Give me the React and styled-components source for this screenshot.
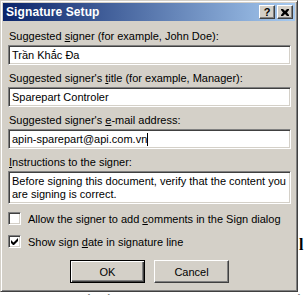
import React from 'react';
import styled, { createGlobalStyle } from 'styled-components';

const Global = createGlobalStyle`
  html, body {
    margin: 0;
    padding: 0;
    background: #ffffff;
    overflow: hidden;
  }
  body {
    font-family: "Liberation Sans", Arial, sans-serif;
  }
`;

const Page = styled.div`
  position: relative;
  width: 307px;
  height: 295px;
  overflow: hidden;
  background: #ffffff;
`;

const Document = styled.div`
  padding-top: 235px;
  font-family: "Liberation Serif", "Times New Roman", serif;
  font-size: 16px;
  font-weight: bold;
  line-height: 20px;
  color: #000;
  white-space: nowrap;
`;

const DocLine = styled.div`
  padding-left: ${p => p.indent}px;
  margin-top: ${p => p.top || 0}px;
`;

const Dialog = styled.div`
  position: absolute;
  left: 0;
  top: 0;
  width: 298px;
  height: 292px;
  box-sizing: border-box;
  background: #d4d0c8;
  border: 1px solid;
  border-color: #d4d0c8 #404040 #404040 #d4d0c8;
  box-shadow: inset 1px 1px #ffffff, inset -1px -1px #808080;
  padding: 2px;
  display: flex;
  flex-direction: column;
`;

const TitleBar = styled.div`
  height: 18px;
  background: linear-gradient(to right, #0a246a, #a6caf0);
  display: flex;
  align-items: center;
  padding: 0 2px 0 3px;
`;

const Title = styled.div`
  flex: 1;
  color: #fff;
  font-weight: bold;
  font-size: 12px;
  letter-spacing: 0.1px;
`;

const CaptionButtons = styled.div`
  display: flex;
  gap: 2px;
`;

const CaptionButton = styled.div`
  width: 16px;
  height: 14px;
  box-sizing: border-box;
  background: #d4d0c8;
  border: 1px solid;
  border-color: #ffffff #404040 #404040 #ffffff;
  box-shadow: inset -1px -1px #808080;
  display: flex;
  align-items: center;
  justify-content: center;
  font-size: 11px;
  font-weight: bold;
  color: #000;
  line-height: 1;
`;

const Body = styled.div`
  display: flex;
  flex-direction: column;
  padding: 9px 4px 0 5px;
  font-size: 11px;
  color: #000;
`;

const Label = styled.div`
  height: 13px;
  line-height: 13px;
  padding-left: 1px;
  margin-bottom: 2px;
  white-space: nowrap;
`;

const Field = styled.div`
  height: ${p => p.h || 20}px;
  box-sizing: border-box;
  background: #fff;
  border: 1px solid;
  border-color: #808080 #ffffff #ffffff #808080;
  box-shadow: inset 1px 1px #404040, inset -1px -1px #d4d0c8;
  padding: 3px 3px 0 3px;
  line-height: 13px;
  margin-bottom: 7px;
  white-space: nowrap;
  overflow: hidden;
`;

const Caret = styled.span`
  display: inline-block;
  width: 1px;
  height: 13px;
  background: #000;
  vertical-align: top;
`;

const CheckRow = styled.div`
  display: flex;
  align-items: center;
  height: 13px;
  gap: 7px;
  margin-top: ${p => p.top}px;
  white-space: nowrap;
`;

const Box = styled.div`
  width: 13px;
  height: 13px;
  box-sizing: border-box;
  background: #fff;
  border: 1px solid;
  border-color: #808080 #ffffff #ffffff #808080;
  box-shadow: inset 1px 1px #404040, inset -1px -1px #d4d0c8;
  display: flex;
  align-items: center;
  justify-content: center;
`;

const Buttons = styled.div`
  display: flex;
  justify-content: center;
  gap: 9px;
  margin-top: 12px;
`;

const Button = styled.div`
  width: 75px;
  height: 23px;
  box-sizing: border-box;
  background: #d4d0c8;
  border: 1px solid;
  border-color: ${p => (p.def ? '#000' : '#ffffff #404040 #404040 #ffffff')};
  box-shadow: ${p =>
    p.def
      ? 'inset 1px 1px #ffffff, inset -1px -1px #404040, inset -2px -2px #808080'
      : 'inset -1px -1px #808080'};
  display: flex;
  align-items: center;
  justify-content: center;
  font-size: 11px;
`;

const CloseIcon = () => (
  <svg width="8" height="7" viewBox="0 0 8 7">
    <path d="M0 0h2l2 2 2-2h2v1L6 3.5 8 6v1H6L4 5 2 7H0V6l2-2.5L0 1z" fill="#000" />
  </svg>
);

const CheckIcon = () => (
  <svg width="7" height="7" viewBox="0 0 7 7">
    <path d="M0 2v3l2 2h1l4-4V0L2.5 4.5z" fill="#000" />
  </svg>
);

export default function App() {
  return (
    <Page>
      <Global />
      <Document>
        <DocLine indent={299}>l</DocLine>
        <DocLine indent={30} top={37}>nhận biết rằng chữ ký điện tử được chấp nhận</DocLine>
      </Document>
      <Dialog>
        <TitleBar>
          <Title>Signature Setup</Title>
          <CaptionButtons>
            <CaptionButton>?</CaptionButton>
            <CaptionButton>
              <CloseIcon />
            </CaptionButton>
          </CaptionButtons>
        </TitleBar>
        <Body>
          <Label>
            Suggested <u>s</u>igner (for example, John Doe):
          </Label>
          <Field>Trần Khắc Đa</Field>
          <Label>
            Suggested signer's <u>t</u>itle (for example, Manager):
          </Label>
          <Field>Sparepart Controler</Field>
          <Label>
            Suggested signer's <u>e</u>-mail address:
          </Label>
          <Field>
            apin-sparepart@api.com.vn
            <Caret />
          </Field>
          <Label>
            <u>I</u>nstructions to the signer:
          </Label>
          <Field h={33}>
            Before signing this document, verify that the content you
            <br />
            are signing is correct.
          </Field>
          <CheckRow top={1}>
            <Box />
            <span>
              Allow the signer to add <u>c</u>omments in the Sign dialog
            </span>
          </CheckRow>
          <CheckRow top={10}>
            <Box>
              <CheckIcon />
            </Box>
            <span>
              Show sign <u>d</u>ate in signature line
            </span>
          </CheckRow>
          <Buttons>
            <Button def>OK</Button>
            <Button>Cancel</Button>
          </Buttons>
        </Body>
      </Dialog>
    </Page>
  );
}
